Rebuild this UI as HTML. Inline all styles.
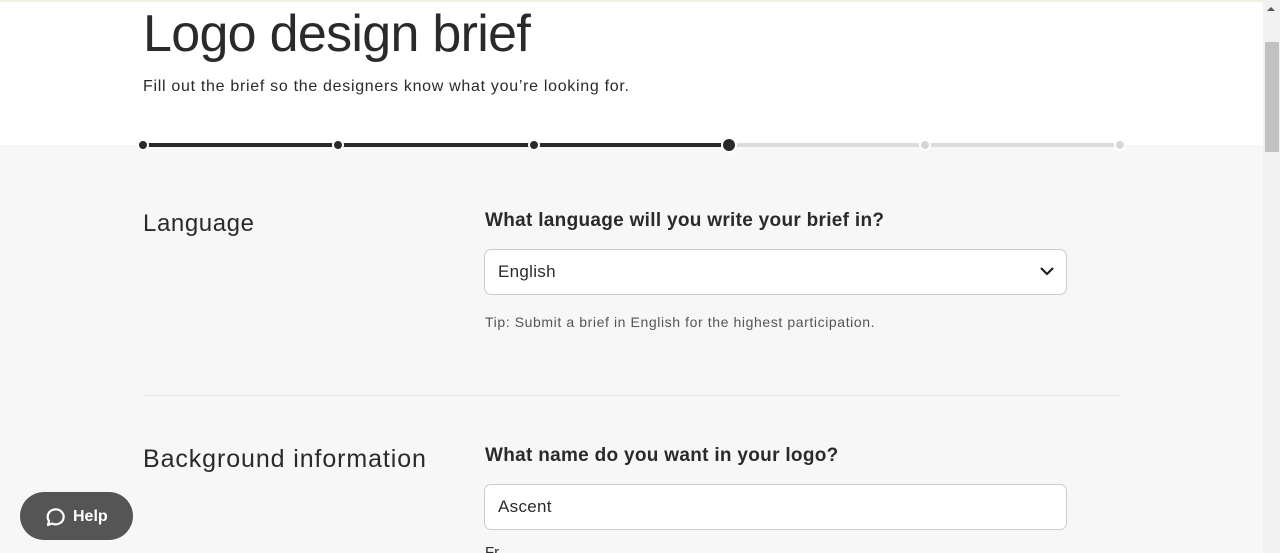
<!DOCTYPE html>
<html style="overflow:hidden;height:553px"><head><style>
*{margin:0;padding:0;box-sizing:border-box}
body{width:1280px;height:553px;overflow:hidden;background:#f7f7f7;font-family:"Liberation Sans",sans-serif;color:#222;position:relative}
.top{position:absolute;left:0;top:0;width:1263px;height:145px;background:#fff;border-top:2px solid #f1eee2}
h1{position:absolute;left:143px;top:2px;font-size:52px;font-weight:400;letter-spacing:-0.7px;color:#2a2a2a}
.sub{position:absolute;left:143px;top:76px;font-size:16px;letter-spacing:0.7px;color:#2a2a2a}
.seg{position:absolute;top:143px;height:4px;border-radius:2px}
.dot{position:absolute;border-radius:50%;border:2px solid #fff}
.sb{position:absolute;right:0;top:0;width:17px;height:553px;background:#f1f1f1}
.thumb{position:absolute;right:1px;top:42px;width:14px;height:110px;background:#c1c1c1}
.h2{position:absolute;left:143px;font-size:25px;letter-spacing:0.6px;color:#2a2a2a}
.q{position:absolute;left:485px;font-size:19px;font-weight:bold;letter-spacing:0.3px;color:#2a2a2a}
.inp{position:absolute;left:484px;width:583px;height:46px;background:#fff;border:1px solid #ccc;border-radius:7px;font-size:17px;letter-spacing:0.3px;padding:12px 13px;color:#2a2a2a}
.tip{position:absolute;left:485px;top:314px;font-size:14px;letter-spacing:0.6px;color:#555}
hr{position:absolute;left:143px;top:395px;width:977px;border:0;border-top:1px solid #e2e2e2}
.help{position:absolute;left:20px;top:492px;width:113px;height:48px;border-radius:24px;background:#555;color:#fff;font-weight:bold;font-size:16px;padding:16px 0 0 53px}
.fr{position:absolute;left:485px;top:544px;height:9px;overflow:hidden;font-size:15px;line-height:18px;color:#2a2a2a}
</style></head><body>
<div class="top">
<h1>Logo design brief</h1>
<div class="sub">Fill out the brief so the designers know what you’re looking for.</div>
</div>
<div class="seg" style="left:143px;width:586px;background:#2a2a2a"></div>
<div class="seg" style="left:729px;width:391px;background:#dcdcdc"></div>
<div class="dot" style="left:137px;top:139px;width:12px;height:12px;background:#2a2a2a"></div>
<div class="dot" style="left:332px;top:139px;width:12px;height:12px;background:#2a2a2a"></div>
<div class="dot" style="left:528px;top:139px;width:12px;height:12px;background:#2a2a2a"></div>
<div class="dot" style="left:721px;top:137px;width:16px;height:16px;background:#2a2a2a"></div>
<div class="dot" style="left:919px;top:139px;width:12px;height:12px;background:#d6d6d6"></div>
<div class="dot" style="left:1114px;top:139px;width:12px;height:12px;background:#d6d6d6"></div>
<div class="h2" style="top:210px;font-size:24px">Language</div>
<div class="q" style="top:210px">What language will you write your brief in?</div>
<div class="inp" style="top:249px">English
<svg style="position:absolute;right:11px;top:15px" width="16" height="12" viewBox="0 0 16 12"><path d="M2 3l6 6 6-6" fill="none" stroke="#222" stroke-width="2.2"/></svg></div>
<div class="tip">Tip: Submit a brief in English for the highest participation.</div>
<hr>
<div class="h2" style="top:445px;letter-spacing:0.9px">Background information</div>
<div class="q" style="top:445px">What name do you want in your logo?</div>
<div class="inp" style="top:484px">Ascent</div>
<div class="fr">Fr</div>
<div class="help"><svg style="position:absolute;left:23px;top:14px" width="22" height="22" viewBox="0 0 22 22"><path d="M5 19l1-4A8 7.5 0 1 1 9 17.5z" fill="none" stroke="#fff" stroke-width="2.2" stroke-linejoin="round"/></svg>Help</div>
<div class="sb"><div class="thumb"></div><div style="position:absolute;left:4px;top:7px;border:4px solid transparent;border-bottom:4px solid #555;border-top:0"></div></div>
</body></html>
